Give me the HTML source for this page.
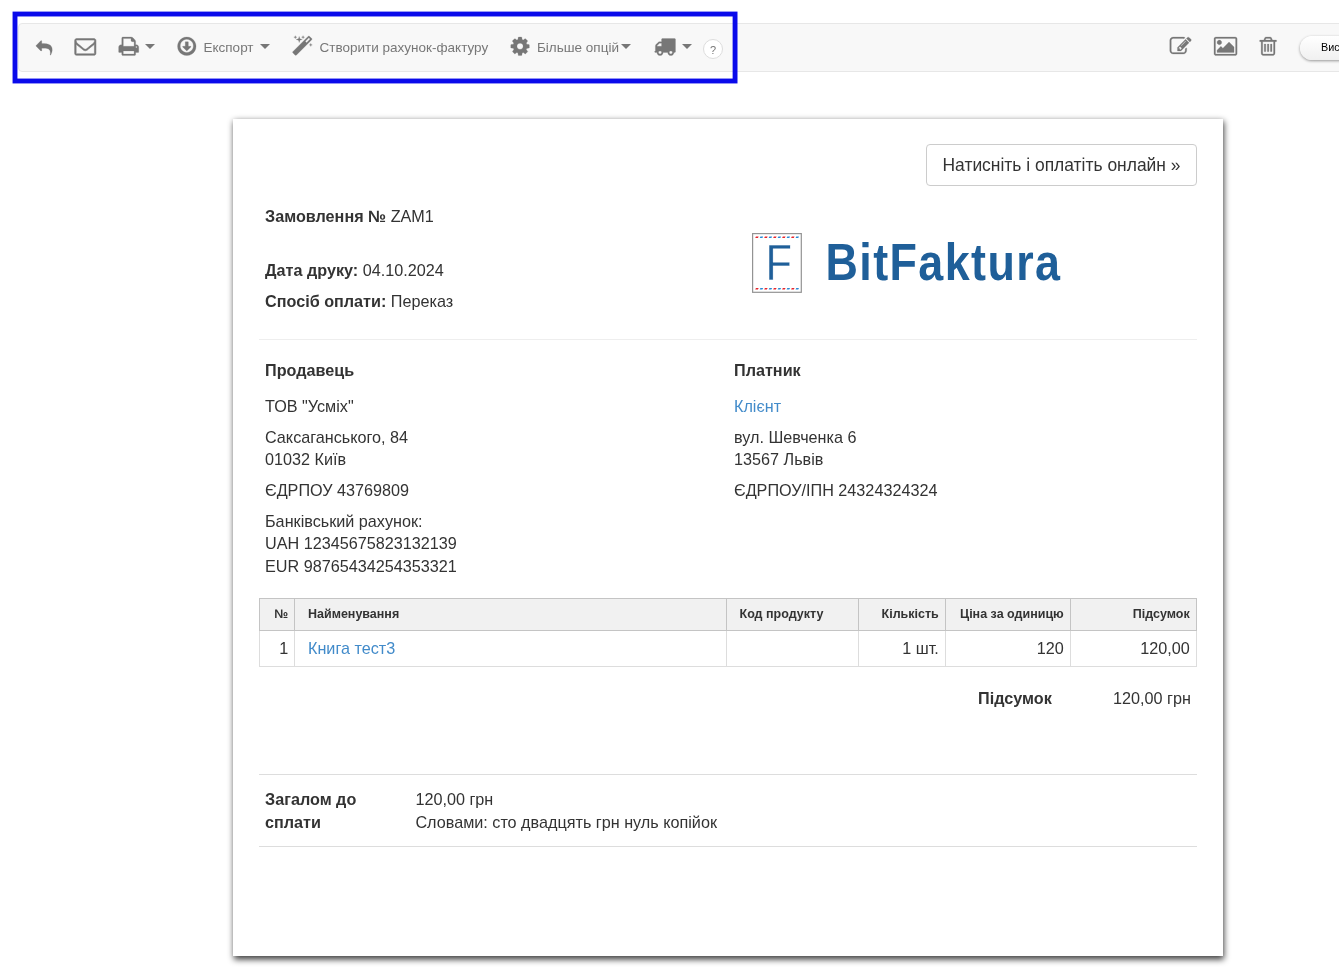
<!DOCTYPE html>
<html lang="uk">
<head>
<meta charset="utf-8">
<title>Замовлення № ZAM1</title>
<style>
*{box-sizing:border-box}
html,body{margin:0;padding:0}
body{width:1339px;height:980px;overflow:hidden;background:#fff;position:relative;
 font-family:"Liberation Sans",sans-serif;font-size:16.2px;line-height:23.14px;color:#333}
a{color:#428bca;text-decoration:none}
b,strong,th{font-weight:bold}
.abs{position:absolute}
#root{position:absolute;left:0;top:0;width:1339px;height:980px;overflow:hidden;will-change:transform}
/* toolbar */
#bar{position:absolute;left:18px;top:23px;width:1400px;height:49px;background:#f8f8f8;border:1px solid #e7e7e7;border-radius:4px}
#hl{position:absolute;left:0;top:0;pointer-events:none}
.ti{position:absolute;fill:#777;color:#777;overflow:visible}
.tt{position:absolute;color:#777;font-size:13.5px;line-height:20px;white-space:nowrap}
.caret{position:absolute;width:0;height:0;border-top:5px solid #777;border-left:5px solid transparent;border-right:5px solid transparent}
#help{position:absolute;left:703px;top:39px;width:20px;height:20px;border:1px solid #ddd;border-radius:50%;background:#fff;color:#777;font-size:11px;line-height:18px;text-align:center;padding-top:1px}
#pill{position:absolute;left:1300px;top:36px;width:120px;height:24px;border-radius:12px;background:linear-gradient(#fff,#f0f0f0);box-shadow:0 1px 3px rgba(0,0,0,.4);font-size:10.8px;line-height:22px;color:#000;padding-left:21px;white-space:nowrap}
/* paper */
#paper{position:absolute;left:233px;top:119px;width:990px;height:837px;background:#fff}
.t{position:absolute;white-space:nowrap}
.hr{position:absolute;height:1px;background:#e5e5e5}
#pay{position:absolute;left:926px;top:144px;width:271px;height:42px;border:1px solid #ccc;border-radius:4px;background:#fff;font-size:17.45px;line-height:40px;text-align:center;color:#333;white-space:nowrap}
/* table */
#tbl{position:absolute;left:259px;top:598px;width:938px;border-collapse:collapse;font-size:16.2px}
#tbl th{background:#f1f1f1;border:1px solid #c4c4c4;font-size:12.5px;line-height:18px;height:32px;padding:0 6.3px 2px;text-align:right;white-space:nowrap}
#tbl td{border:1px solid #ddd;height:36px;padding:0 6.3px 2px;text-align:right;white-space:nowrap;line-height:22px}
#tbl .l{text-align:left;padding-left:13px}
#tbl .c2{padding-left:12.3px}
#tbl .n{padding-right:5.8px}
</style>
</head>
<body>
<div id="root">

<div id="bar"></div>

<!-- toolbar icons (left) -->
<svg class="ti" style="left:34px;top:39px" width="20" height="18"><path transform="translate(1.950 0.991) scale(0.009096)" d="M1792 1120q0 166-127 451-3 7-10.5 24t-13.5 30-13 22q-12 17-28 17-15 0-23.5-10t-8.5-25q0-9 2.5-26.5t2.5-23.5q5-68 5-123 0-101-17.5-181t-48.5-138.5-80-101-105.5-69.5-133-42.5-154-21.5-175.5-6h-224v256q0 26-19 45t-45 19-45-19l-512-512q-19-19-19-45t19-45l512-512q19-19 45-19t45 19 19 45v256h224q713 0 875 403 53 134 53 333z" stroke="#777" stroke-width="20"/></svg>

<svg class="ti" style="left:73px;top:37px" width="25" height="20"><path transform="translate(1.650 -1.461) scale(0.011886)" d="M1664 1504v-768q-32 36-69 66-268 206-426 338-51 43-83 67t-86.5 48.5-102.5 24.5h-2q-48 0-102.5-24.5t-86.5-48.5-83-67q-158-132-426-338-37-30-69-66v768q0 13 9.5 22.5t22.5 9.5h1472q13 0 22.5-9.5t9.5-22.5zm0-1051v-24.5l-.5-13-3-12.5-5.5-9-9-7.5-14-2.5h-1472q-13 0-22.5 9.5t-9.5 22.5q0 168 147 284 193 152 401 317 6 5 35 29.5t46 37.5 44.5 31.5 50.5 27.5 43 9h2q20 0 43-9t50.5-27.5 44.5-31.5 46-37.5 35-29.5q208-165 401-317 54-43 100.5-115.5t46.5-131.5zm128-37v1088q0 66-47 113t-113 47h-1472q-66 0-113-47t-47-113v-1088q0-66 47-113t113-47h1472q66 0 113 47t47 113z" stroke="#777" stroke-width="44"/></svg>

<svg class="ti" style="left:117px;top:36px" width="24" height="22"><path transform="translate(0.900 -0.514) scale(0.012054)" d="M448 1536h896v-256h-896v256zm0-640h896v-384h-160q-40 0-68-28t-28-68v-160h-640v640zm1152 64q0-26-19-45t-45-19-45 19-19 45 19 45 45 19 45-19 19-45zm128 0v416q0 13-9.5 22.5t-22.5 9.5h-224v160q0 40-28 68t-68 28h-960q-40 0-68-28t-28-68v-160h-224q-13 0-22.5-9.5t-9.5-22.5v-416q0-79 56.5-135.5t135.5-56.5h64v-544q0-40 28-68t68-28h672q40 0 88 20t76 48l152 152q28 28 48 76t20 88v256h64q79 0 135.5 56.5t56.5 135.5z" stroke="#777" stroke-width="20"/></svg>
<div class="caret" style="left:145px;top:44px"></div>

<svg class="ti" style="left:176px;top:36px" width="22" height="22"><path transform="translate(1.543 -0.514) scale(0.012054)" d="M1120 928q0 12-10 24l-319 319q-11 9-23 9t-23-9l-320-320q-15-16-7-35 8-20 30-20h192v-352q0-14 9-23t23-9h192q14 0 23 9t9 23v352h192q14 0 23 9t9 23zm-352-608q-148 0-273 73t-198 198-73 273 73 273 198 198 273 73 273-73 198-198 73-273-73-273-198-198-273-73zm768 576q0 209-103 385.5t-279.5 279.5-385.5 103-385.5-103-279.5-279.5-103-385.5 103-385.5 279.5-279.5 385.5-103 385.5 103 279.5 279.5 103 385.5z" stroke="#777" stroke-width="20"/></svg>
<div class="tt" style="left:203.5px;top:38px">Експорт</div>
<div class="caret" style="left:260px;top:44px"></div>

<svg class="ti" style="left:291px;top:34px" width="23" height="23"><path transform="translate(0.487 1.634) scale(0.012054)" d="M1254 581l293-293-107-107-293 293zm447-293q0 27-18 45l-1286 1286q-18 18-45 18t-45-18l-198-198q-18-18-18-45t18-45l1286-1286q18-18 45-18t45 18l198 198q18 18 18 45zm-1351-190l98 30-98 30-30 98-30-98-98-30 98-30 30-98zm350 162l196 60-196 60-60 196-60-196-196-60 196-60 60-196zm930 478l98 30-98 30-30 98-30-98-98-30 98-30 30-98zm-640-640l98 30-98 30-30 98-30-98-98-30 98-30 30-98z" stroke="#777" stroke-width="20"/></svg>
<div class="tt" style="left:319.6px;top:38px">Створити рахунок-фактуру</div>

<svg class="ti" style="left:509px;top:36px" width="22" height="22"><path transform="translate(0.250 -0.514) scale(0.012054)" d="M1152 896q0-106-75-181t-181-75-181 75-75 181 75 181 181 75 181-75 75-181zm512-109v222q0 12-8 23t-20 13l-185 28q-19 54-39 91 35 50 107 138 10 12 10 25t-9 23q-27 37-99 108t-94 71q-12 0-26-9l-138-108q-44 23-91 38-16 136-29 186-7 28-36 28h-222q-14 0-24.5-8.5t-11.5-21.5l-28-184q-49-16-90-37l-141 107q-10 9-25 9-14 0-25-11-126-114-165-168-7-10-7-23 0-12 8-23 15-21 51-66.5t54-70.5q-27-50-41-99l-183-27q-13-2-21-12.5t-8-23.5v-222q0-12 8-23t19-13l186-28q14-46 39-92-40-57-107-138-10-12-10-24 0-10 9-23 26-36 98.5-107.5t94.5-71.5q13 0 26 10l138 107q44-23 91-38 16-136 29-186 7-28 36-28h222q14 0 24.5 8.5t11.5 21.5l28 184q49 16 90 37l142-107q9-9 24-9 13 0 25 10 129 119 165 170 7 8 7 22 0 12-8 23-15 21-51 66.5t-54 70.5q26 50 41 98l183 28q13 2 21 12.5t8 23.5z" stroke="#777" stroke-width="20"/></svg>
<div class="tt" style="left:537px;top:38px">Більше опцій</div>
<div class="caret" style="left:621px;top:44px"></div>

<svg class="ti" style="left:653px;top:37px" width="24" height="20"><path transform="translate(0.864 -1.514) scale(0.012054)" d="M640 1408q0-52-38-90t-90-38-90 38-38 90 38 90 90 38 90-38 38-90zm-384-512h384v-256h-158q-13 0-22 9l-195 195q-9 9-9 22v30zm1280 512q0-52-38-90t-90-38-90 38-38 90 38 90 90 38 90-38 38-90zm256-1088v1024q0 15-4 26.5t-13.5 18.5-16.5 11.5-23.5 6-22.5 2-25.5 0-22.5-.5q0 106-75 181t-181 75-181-75-75-181h-384q0 106-75 181t-181 75-181-75-75-181h-64q-3 0-22.5.5t-25.5 0-22.5-2-23.5-6-16.5-11.5-13.5-18.5-4-26.5q0-26 19-45t45-19v-320q0-8-.5-35t0-38 2.5-34.5 6.5-37 14-30.5 22.5-30l198-198q19-19 50.5-32t58.5-13h160v-192q0-26 19-45t45-19h1024q26 0 45 19t19 45z" stroke="#777" stroke-width="20"/></svg>
<div class="caret" style="left:682px;top:44px"></div>
<div id="help">?</div>

<!-- toolbar icons (right) -->
<svg class="ti" style="left:1168px;top:36px" width="25" height="20"><path transform="translate(1.748 -0.514) scale(0.012054)" d="M888 1184l116-116-152-152-116 116v56h96v96h56zm440-720q-16-16-33 1l-350 350q-17 17-1 33t33-1l350-350q17-17 1-33zm80 594v190q0 119-84.5 203.5t-203.5 84.5h-832q-119 0-203.5-84.5t-84.5-203.5v-832q0-119 84.5-203.5t203.5-84.5h832q63 0 117 25 15 7 18 23 3 17-9 29l-49 49q-14 14-32 8-23-6-45-6h-832q-66 0-113 47t-47 113v832q0 66 47 113t113 47h832q66 0 113-47t47-113v-126q0-13 9-22l64-64q15-15 35-7t20 29zm-96-738l288 288-672 672h-288v-288zm444 132l-92 92-288-288 92-92q28-28 68-28t68 28l152 152q28 28 28 68t-28 68z" stroke="#777" stroke-width="20"/></svg>

<svg class="ti" style="left:1212px;top:36px" width="27" height="22"><path transform="translate(1.979 -0.514) scale(0.012054)" d="M640 576q0 80-56 136t-136 56-136-56-56-136 56-136 136-56 136 56 56 136zm1024 384v448h-1408v-192l320-320 160 160 512-512zm96-704h-1600q-13 0-22.5 9.5t-9.5 22.5v1216q0 13 9.5 22.5t22.5 9.5h1600q13 0 22.5-9.5t9.5-22.5v-1216q0-13-9.5-22.5t-22.5-9.5zm160 32v1216q0 66-47 113t-113 47h-1600q-66 0-113-47t-47-113v-1216q0-66 47-113t113-47h1600q66 0 113 47t47 113z" stroke="#777" stroke-width="20"/></svg>

<svg class="ti" style="left:1258px;top:36px" width="20" height="22"><path transform="translate(-0.700 -0.514) scale(0.012054)" d="M704 736v576q0 14-9 23t-23 9h-64q-14 0-23-9t-9-23v-576q0-14 9-23t23-9h64q14 0 23 9t9 23zm256 0v576q0 14-9 23t-23 9h-64q-14 0-23-9t-9-23v-576q0-14 9-23t23-9h64q14 0 23 9t9 23zm256 0v576q0 14-9 23t-23 9h-64q-14 0-23-9t-9-23v-576q0-14 9-23t23-9h64q14 0 23 9t9 23zm128 724v-948h-896v948q0 22 7 40.5t14.5 27 10.5 8.5h832q3 0 10.5-8.5t14.5-27 7-40.5zm-672-1076h448l-48-117q-7-9-17-11h-317q-10 2-17 11zm928 32v64q0 14-9 23t-23 9h-96v948q0 83-47 143.5t-113 60.5h-832q-66 0-113-58.5t-47-141.5v-952h-96q-14 0-23-9t-9-23v-64q0-14 9-23t23-9h309l70-167q15-37 54-63t79-26h320q40 0 79 26t54 63l70 167h309q14 0 23 9t9 23z" stroke="#777" stroke-width="20"/></svg>

<div id="pill">Висновок</div>

<svg id="hl" width="740" height="90" viewBox="0 0 740 90"><rect x="15" y="14.03" width="720.06" height="66.97" fill="none" stroke="#0a0aeb" stroke-width="4.87"/></svg>

<!-- paper -->
<svg class="abs" style="left:200px;top:90px" width="1060" height="890"><filter id="blur3" x="-5%" y="-5%" width="110%" height="110%"><feGaussianBlur stdDeviation="3"/></filter><rect x="33.9" y="31.2" width="990" height="838.2" fill="#000" fill-opacity=".76" filter="url(#blur3)"/></svg>
<div id="paper"></div>
<div id="pay">Натисніть і оплатіть онлайн »</div>

<div class="t" style="left:265px;top:205px"><b>Замовлення №</b> ZAM1</div>
<div class="t" style="left:265px;top:259px"><b>Дата друку:</b> 04.10.2024</div>
<div class="t" style="left:265px;top:290px"><b>Спосіб оплати:</b> Переказ</div>

<!-- logo -->
<svg class="abs" style="left:745px;top:225px" width="330" height="75" viewBox="745 225 330 75">
 <rect x="752.6" y="233.6" width="48.7" height="58.7" fill="#fff" stroke="#939393" stroke-width="1.2"/>
 <g stroke-width="1.5" stroke-dasharray="2.7 6.26" fill="none">
  <g transform="translate(0 237.25) skewX(-25)"><line x1="755.6" y1="0" x2="799" y2="0" stroke="#e5262d"/><line x1="760.08" y1="0" x2="799" y2="0" stroke="#2a8ad4"/></g>
  <g transform="translate(0 288.7) skewX(-25)"><line x1="755.6" y1="0" x2="799" y2="0" stroke="#e5262d"/><line x1="760.08" y1="0" x2="799" y2="0" stroke="#2a8ad4"/></g>
 </g>
 <text transform="translate(778.6 280.2) scale(0.875 1)" text-anchor="middle" font-family="'Liberation Sans',sans-serif" font-size="49.4" fill="#1f5f99" stroke="#fff" stroke-width="0.35">F</text>
 <text transform="translate(825.5 280.3) scale(0.88 1)" font-family="'Liberation Sans',sans-serif" font-weight="bold" font-size="51" fill="#1f5f99" textLength="266.5" lengthAdjust="spacing">BitFaktura</text>
</svg>

<div class="hr" style="left:259px;top:339px;width:938px;background:#eee"></div>

<div class="t" style="left:265px;top:359px"><b>Продавець</b></div>
<div class="t" style="left:265px;top:395px">ТОВ "Усміх"</div>
<div class="t" style="left:265px;top:426px;line-height:22.45px">Саксаганського, 84<br>01032 Київ</div>
<div class="t" style="left:265px;top:479px">ЄДРПОУ 43769809</div>
<div class="t" style="left:265px;top:510px;line-height:22.45px">Банківський рахунок:<br>UAH 12345675823132139<br>EUR 98765434254353321</div>

<div class="t" style="left:734px;top:359px"><b>Платник</b></div>
<div class="t" style="left:734px;top:395px"><a>Клієнт</a></div>
<div class="t" style="left:734px;top:426px;line-height:22.45px">вул. Шевченка 6<br>13567 Львів</div>
<div class="t" style="left:734px;top:479px">ЄДРПОУ/ІПН 24324324324</div>

<table id="tbl">
 <colgroup><col style="width:35px"><col style="width:433px"><col style="width:132px"><col style="width:87px"><col style="width:125px"><col style="width:126px"></colgroup>
 <tr><th class="n">№</th><th class="l">Найменування</th><th class="l c2">Код продукту</th><th>Кількість</th><th>Ціна за одиницю</th><th>Підсумок</th></tr>
 <tr><td class="n">1</td><td class="l"><a>Книга тест3</a></td><td></td><td>1 шт.</td><td>120</td><td>120,00</td></tr>
</table>

<div class="t" style="left:978px;top:687px"><b>Підсумок</b></div>
<div class="t" style="left:1113px;top:687px">120,00 грн</div>

<div class="hr" style="left:259px;top:774px;width:938px;background:#ddd"></div>
<div class="t" style="left:265px;top:788px;line-height:23.14px"><b>Загалом до<br>сплати</b></div>
<div class="t" style="left:415.4px;top:788px;line-height:23.14px">120,00 грн<br>Словами: сто двадцять грн нуль копійок</div>
<div class="hr" style="left:259px;top:846px;width:938px;background:#ddd"></div>

</div>
</body>
</html>
